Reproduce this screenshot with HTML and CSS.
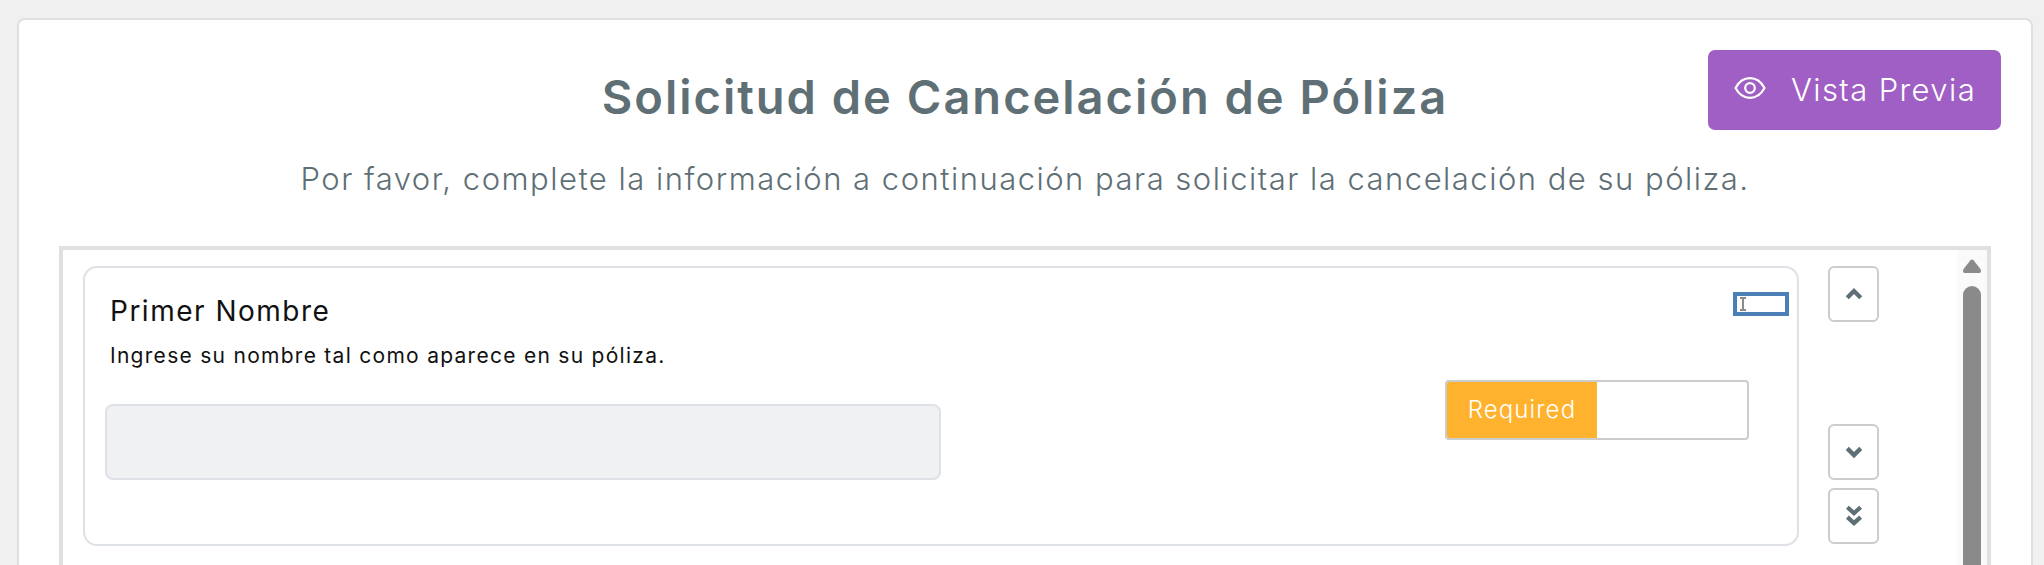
FILE: index.html
```html
<!DOCTYPE html>
<html lang="es">
<head>
  <meta charset="UTF-8">
  <title>Solicitud de Cancelación de Póliza</title>
  <link rel="stylesheet" href="styles.css">
</head>
<body>

  <div class="page-card">
    <div class="page-header">
      <h1>Solicitud de Cancelación de Póliza</h1>
      <button class="preview-btn">
        <svg class="eye-icon" viewBox="0 0 32 24" aria-hidden="true">
          <path d="M1.5 12C5 5.5 10 2.2 16 2.2S27 5.500 30.500 12C27 18.500 22 21.800 16 21.800S5 18.500 1.500 12Z"/>
          <circle cx="16" cy="12" r="4.800"/>
        </svg>
        <span>Vista Previa</span>
      </button>
    </div>
    <p class="intro">Por favor, complete la información a continuación para solicitar la cancelación de su póliza.</p>

    <div class="form-box">
      <div class="field-card">
        <div class="field-main">
          <div class="field-label">Primer Nombre</div>
          <div class="field-hint">Ingrese su nombre tal como aparece en su póliza.</div>
          <div class="field-input"></div>
        </div>
        <div class="required-toggle">
          <div class="required-on">Required</div>
        </div>
        <!-- campo pequeno com o cursor -->
        <div class="mini-input">
          <svg class="ibeam" viewBox="0 0 8 14" aria-hidden="true">
            <path d="M1 1H7M4 1V13M1 13H7"/>
          </svg>
        </div>
      </div>

      <div class="move-btns">
        <button class="move-btn move-up">
          <svg viewBox="0 0 16 12" aria-hidden="true"><path d="M2 9.500L8 3.500L14 9.500"/></svg>
        </button>
        <button class="move-btn">
          <svg viewBox="0 0 16 12" aria-hidden="true"><path d="M2 3L8 9L14 3"/></svg>
        </button>
        <button class="move-btn">
          <svg class="tall" viewBox="0 0 16 20" aria-hidden="true"><path d="M2 2L8 7.500L14 2M2 11L8 16.500L14 11"/></svg>
        </button>
      </div>

      <div class="scroll-rail">
        <svg class="scroll-arrow" viewBox="0 0 18 14" aria-hidden="true">
          <path d="M7.500 1.200Q9 0 10.500 1.200L17.500 10Q18.800 14 16 14H2Q-.8 14 .5 10Z"/>
        </svg>
        <div class="scroll-thumb"></div>
      </div>
    </div>
  </div>

</body>
</html>
```

FILE: styles.css
```css
html, body {
  margin: 0;
  height: 565px;
  overflow: hidden;
}

body {
  background: #f0f0f0;
  font-family: Inter, "Open Sans", sans-serif;
  padding: 18px 11px 0 17px;
  box-sizing: border-box;
}

.page-card {
  background: #fff;
  border: 2px solid #e0e0e0;
  border-radius: 8px;
  padding: 30px 30px 0 40px;
  height: 700px;
  box-sizing: border-box;
}

.page-header {
  display: grid;
  grid-template-columns: 1fr auto 1fr;
}

.page-header h1 {
  grid-column: 2;
  margin: 22px 10px 0 0;
  font-size: 47px;
  line-height: 50px;
  font-weight: 600;
  letter-spacing: 2px;
  color: #5f6f76;
  white-space: nowrap;
}

.preview-btn {
  grid-column: 3;
  justify-self: end;
  display: flex;
  align-items: center;
  gap: 25px;
  width: 293px;
  height: 80px;
  padding: 0 0 2px 26px;
  background: #a05fc4;
  color: #fff;
  border: none;
  border-radius: 7px;
  font-family: inherit;
  font-size: 31px;
  font-weight: 300;
  letter-spacing: 1.4px;
}

.eye-icon {
  width: 32px;
  height: 24px;
  margin-bottom: 2px;
  fill: none;
  stroke: #fff;
  stroke-width: 2.200;
}

.intro {
  margin: 31px 10px 0 0;
  font-size: 31px;
  line-height: 36px;
  font-weight: 300;
  letter-spacing: 1.49px;
  color: #5f6f76;
  text-align: center;
  white-space: nowrap;
}

.form-box {
  display: flex;
  margin: 49px 10px 0 0;
  padding: 16px 0 0 20px;
  height: 400px;
  border: 4px solid #e0e0e0;
  box-sizing: border-box;
}

.field-card {
  position: relative;
  display: flex;
  justify-content: space-between;
  width: 1716px;
  height: 280px;
  padding: 23px 48px 0 20px;
  background: #fff;
  border: 2px solid #dee2e6;
  border-radius: 14px;
  box-sizing: border-box;
  color: #111;
}

.field-label {
  padding-left: 5px;
  font-size: 28px;
  line-height: 40px;
  font-weight: 400;
  letter-spacing: 1.5px;
}

.field-hint {
  margin-top: 10px;
  padding-left: 5px;
  font-size: 21px;
  line-height: 30px;
  letter-spacing: 1.28px;
}

.field-input {
  margin-top: 33px;
  width: 836px;
  height: 76px;
  background: #eff1f3;
  border: 2px solid #dee2e6;
  border-radius: 8px;
  box-sizing: border-box;
}

.required-toggle {
  margin-top: 89px;
  width: 304px;
  height: 60px;
  background: #fff;
  border: 2px solid #ccc;
  border-radius: 4px;
  box-sizing: border-box;
  overflow: hidden;
}

.required-on {
  width: 150px;
  height: 100%;
  background: #ffb22e;
  color: #fff;
  font-size: 24px;
  font-weight: 300;
  letter-spacing: 1.1px;
  line-height: 56px;
  text-align: center;
}

.mini-input {
  position: absolute;
  top: 24px;
  right: 8px;
  display: flex;
  align-items: center;
  width: 56px;
  height: 24px;
  padding-left: 2px;
  background: #fff;
  border: 4px solid #4a80b5;
  box-sizing: border-box;
}

.ibeam {
  width: 8px;
  height: 14px;
  fill: none;
  stroke: #8a8a8a;
  stroke-width: 2;
}

.move-btns {
  display: flex;
  flex-direction: column;
  gap: 8px;
  margin-left: 29px;
}

.move-btn {
  display: flex;
  align-items: center;
  justify-content: center;
  width: 51px;
  height: 56px;
  padding: 0;
  background: #fff;
  border: 2px solid #ccc;
  border-radius: 6px;
}

.move-up {
  margin-bottom: 94px;
}

.move-btn svg {
  width: 18px;
  height: 13.500px;
  fill: none;
  stroke: #5f6f76;
  stroke-width: 3.800;
}

.move-btn svg.tall {
  height: 22px;
}

.scroll-rail {
  display: flex;
  flex-direction: column;
  margin: -16px 0 0 78px;
  padding: 9px 6px 0;
  background: #fafafa;
}

.scroll-arrow {
  width: 18px;
  height: 14px;
  fill: #8a8a8a;
}

.scroll-thumb {
  flex: 1;
  width: 18px;
  margin-top: 13px;
  background: #8a8a8a;
  border-radius: 9px 9px 0 0;
}
```
